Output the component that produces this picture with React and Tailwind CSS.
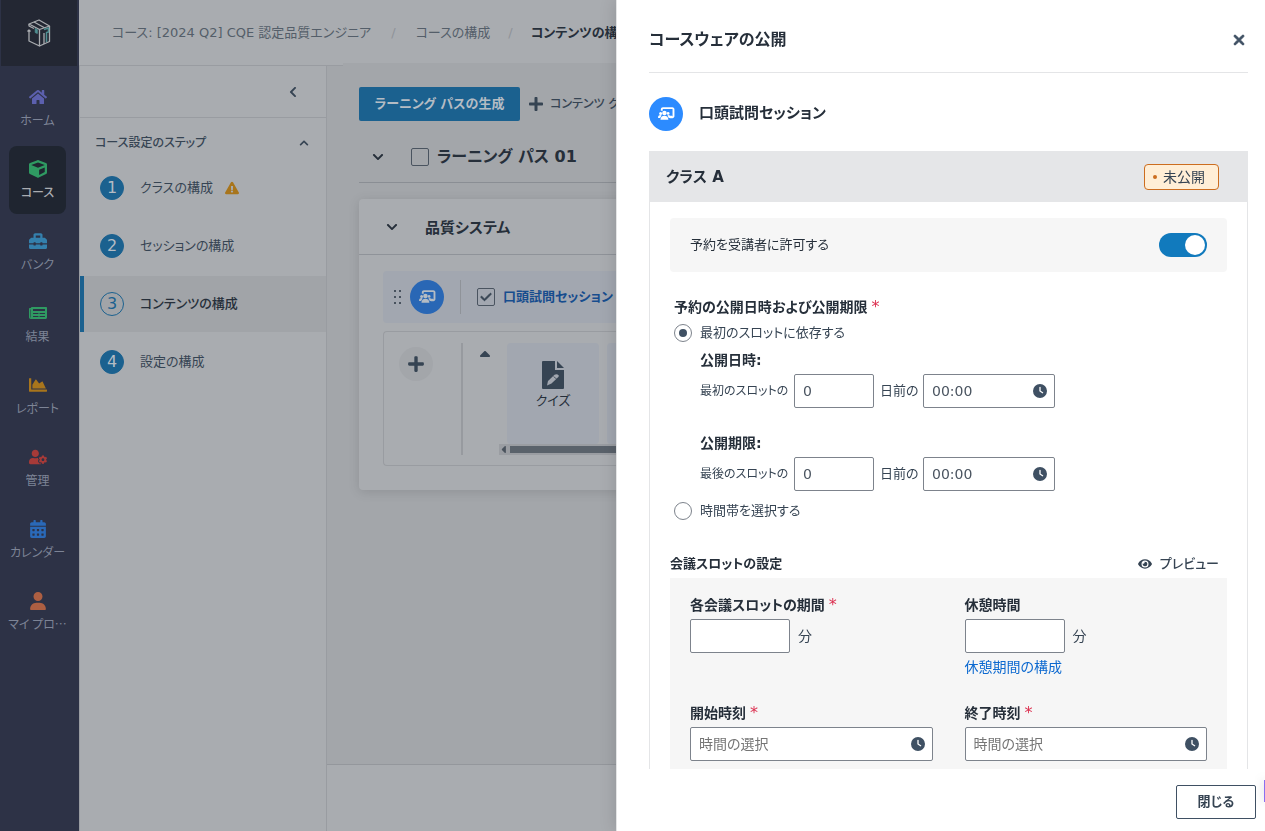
import { useState } from 'react';
import clsx from 'clsx';
import {
  FaHome,
  FaCube,
  FaToolbox,
  FaNewspaper,
  FaChartArea,
  FaUserCog,
  FaCalendarAlt,
  FaExclamationTriangle,
  FaChevronDown,
  FaChevronUp,
  FaChevronLeft,
  FaPlus,
  FaEye,
} from 'react-icons/fa';
import { FaUser, FaXmark, FaClock, FaCheck, FaCaretUp, FaCaretLeft } from 'react-icons/fa6';

const NAV = [
  { label: 'ホーム', icon: FaHome, color: 'text-[#5c60ae]' },
  { label: 'コース', icon: FaCube, color: 'text-[#2f9a62]', active: true },
  { label: 'バンク', icon: FaToolbox, color: 'text-[#3480ad]' },
  { label: '結果', icon: FaNewspaper, color: 'text-[#2f9a62]' },
  { label: 'レポート', icon: FaChartArea, color: 'text-[#a8751c]' },
  { label: '管理', icon: FaUserCog, color: 'text-[#a63a38]' },
  { label: 'カレンダー', icon: FaCalendarAlt, color: 'text-[#2a69b8]' },
  { label: 'マイ プロ…', icon: FaUser, color: 'text-[#ad5f42]' },
];

const STEPS = [
  { label: 'クラスの構成', warning: true },
  { label: 'セッションの構成' },
  { label: 'コンテンツの構成', current: true },
  { label: '設定の構成' },
];

function Logo() {
  return (
    <svg viewBox="0 0 24 28" className="w-6 h-7" fill="none" stroke="#a9acb0" strokeWidth="1.3" strokeLinejoin="round">
      <path d="M2 5 L12 1 L22.5 7 L12.5 10.5 Z" />
      <path d="M7 3 L17.5 8.7" />
      <path d="M0.5 12.5 L2 11 L3.5 12.5 M2 11.5 V22 L12.5 27 V10.5" />
      <path d="M22.5 7 V22.5 L12.5 27" />
      <path d="M17 14 V25" />
      <path d="M2 5 V7 L7 9.5" />
      <path d="M8.2 9.5 V13.5 L10.3 14.5 V10.5 Z" fill="#4f8f92" stroke="#4f8f92" strokeWidth="0.8" />
      <path d="M17 10.5 L21.5 9 V13 L19.5 13.5 V23" stroke="#4f8f92" strokeWidth="1.5" />
    </svg>
  );
}

function SessionIcon({ className }) {
  return (
    <svg viewBox="0 0 18 14" className={className}>
      <path d="M4 4 V2.4 A1.2 1.2 0 0 1 5.2 1.2 H15 A1.2 1.2 0 0 1 16.4 2.4 V9.4 A1.2 1.2 0 0 1 15 10.8 H12.5" fill="none" stroke="currentColor" strokeWidth="2" />
      <path d="M11.5 9.2 H15 V11 H12 Z" fill="currentColor" />
      <circle cx="6.8" cy="6.4" r="2.4" fill="currentColor" />
      <circle cx="2.8" cy="6.8" r="1.6" fill="currentColor" />
      <circle cx="10.7" cy="6.8" r="1.5" fill="currentColor" />
      <path d="M2.6 13.6 Q2.8 9.2 6.8 9.2 Q10.8 9.2 11 13.6 Z" fill="currentColor" />
      <path d="M0 11.6 Q0 8.6 2.6 8.6 L3.8 9 L2.2 11.6 Z" fill="currentColor" />
      <path d="M10 9 L11 8.6 Q13.4 8.8 13.4 11.6 H11.4 Z" fill="currentColor" />
    </svg>
  );
}

function QuizIcon() {
  return (
    <svg viewBox="0 0 22 28" className="w-[22px] h-7">
      <path d="M0 1 Q0 0 1 0 H13 V9 H22 V27 Q22 28 21 28 H1 Q0 28 0 27 Z" fill="#364453" />
      <path d="M15 0 L22 7 H15 Z" fill="#364453" />
      <path d="M5 24.5 L6 20 L12.5 13.7 Q15 12.3 16.8 14.6 Q17 15.2 16.3 16 L9.5 22.6 Z" fill="#a2a7b0" />
      <path d="M11.5 15.5 L14.8 18.2" stroke="#364453" strokeWidth="0.8" />
    </svg>
  );
}

function DragHandle() {
  return (
    <svg viewBox="0 0 8 15" className="w-2 h-[15px]" fill="#48525e">
      <path d="M0 0h2v2H0z M5 0h2v2H5z M0 6h2v2H0z M5 6h2v2H5z M0 12h2v2H0z M5 12h2v2H5z" />
    </svg>
  );
}

function Checkbox({ label, defaultChecked }) {
  return (
    <span className="grid shrink-0 place-items-center">
      <input
        type="checkbox"
        aria-label={label}
        defaultChecked={defaultChecked}
        className="peer col-start-1 row-start-1 size-[18px] appearance-none rounded-xs border border-[#4a5460]"
      />
      <FaCheck className="pointer-events-none invisible col-start-1 row-start-1 size-3 text-[#364453] peer-checked:visible" stroke="currentColor" strokeWidth="30" />
    </span>
  );
}

function Sidebar() {
  return (
    <nav className="flex w-[79px] shrink-0 flex-col bg-[#2d3246]">
      <a href="#top" aria-label="トップ" className="ml-px mr-0.5 flex h-[66px] items-center justify-center bg-[#232733]">
        <Logo />
      </a>
      <ul className="mr-1 flex flex-col items-center gap-1 pt-2">
        {NAV.map(({ label, icon: Icon, color, active }) => (
          <li key={label}>
            <a
              href="#nav"
              className={clsx(
                "flex h-[68px] w-[57px] flex-col items-center rounded-lg pt-3.5 font-['Noto_Sans_CJK_JP',sans-serif] text-xs",
                active ? 'bg-[#1f2530] text-[#a9acb0] font-medium' : 'text-[#7d8496]'
              )}
            >
              <Icon className={clsx('size-[18px]', color)} />
              <span className="mt-1 block h-5 text-center leading-5 whitespace-nowrap">{label}</span>
            </a>
          </li>
        ))}
      </ul>
    </nav>
  );
}

function StepPanel() {
  return (
    <aside className="flex w-[248px] shrink-0 flex-col border-x border-[#999ca1]">
      <div className="flex h-[52px] items-center justify-end border-b border-[#999ca1] pr-[27px]">
        <button type="button" aria-label="折りたたむ">
          <FaChevronLeft className="size-3 text-[#364453]" />
        </button>
      </div>
      <button type="button" className="flex h-[42px] items-center justify-between pt-2 pr-[17px] pl-[15px] text-xs font-medium">
        コース設定のステップ
        <FaChevronUp className="size-2.5" />
      </button>
      <ol className="flex flex-col gap-0.5">
        {STEPS.map((step, i) => (
          <li key={step.label}>
            <a
              href="#step"
              className={clsx(
                'flex h-14 items-center border-l-4 pl-4 text-[13px]',
                step.current ? 'border-[#1b618f] bg-[#a1a4a8] font-medium text-[#262f3a]' : 'border-transparent'
              )}
            >
              <span
                className={clsx(
                  'flex size-6 items-center justify-center rounded-full border border-[#1b618f] text-base font-normal',
                  step.current ? 'text-[#1b618f]' : 'bg-[#1b618f] text-[#b4bcc4]'
                )}
              >
                {i + 1}
              </span>
              <span className="ml-4">{step.label}</span>
              {step.warning && <FaExclamationTriangle className="ml-3 size-3.5 text-[#a8751c]" />}
            </a>
          </li>
        ))}
      </ol>
    </aside>
  );
}

function LearningPath() {
  return (
    <main className="flex min-w-0 flex-1 flex-col bg-[#a3a6aa]">
      <div className="-mt-[3px] ml-4 flex-1 overflow-hidden bg-[#a3a6aa] pt-6 pl-4 whitespace-nowrap">
        <div className="flex items-center">
          <button type="button" className="h-[34px] w-[161px] rounded-xs bg-[#1b618f] text-[13px] font-bold text-[#b4bcc4]">
            ラーニング パスの生成
          </button>
          <button type="button" className="ml-2 flex items-center gap-1.5 text-xs font-medium">
            <FaPlus className="size-4" />
            コンテンツ グループの追加
          </button>
        </div>
        <div className="flex h-[62px] items-center border-b border-[#8a8e94] pt-2.5 pl-[13px]">
          <FaChevronDown className="size-3 text-[#262f3a]" />
          <span className="ml-[27px]">
            <Checkbox label="ラーニング パス 01" />
          </span>
          <h1 className="ml-2 text-base font-bold text-[#262f3a]">ラーニング パス 01</h1>
        </div>

        <section className="mt-4 rounded-sm bg-[#a9acb0] pb-6 shadow-[0_2px_12px_rgba(0,0,0,0.12)]">
          <header className="flex h-14 items-center border-b border-[#8f9399] pl-[27px]">
            <FaChevronDown className="size-3 text-[#262f3a]" />
            <h2 className="ml-[27px] pt-1 text-[15px] font-bold text-[#262f3a]">品質システム</h2>
          </header>
          <div className="mt-4 ml-6 flex h-[52px] items-center rounded-sm bg-[#a2a7b0] pl-[11px]">
            <DragHandle />
            <span className="ml-2 flex size-[34px] items-center justify-center rounded-full bg-[#2967b5] text-[#b4bcc4]">
              <SessionIcon className="w-[17px]" />
            </span>
            <span className="ml-4 h-[34px] w-px bg-[#8f9399]" />
            <span className="ml-4">
              <Checkbox label="口頭試問セッション" defaultChecked />
            </span>
            <a href="#session" className="ml-2 text-[13px] font-bold text-[#174d8e]">口頭試問セッション</a>
          </div>
          <div className="mt-2 ml-6 flex h-[135px] rounded-sm border border-r-0 border-[#999ca1] pt-[11px] pl-[15px]">
            <button type="button" aria-label="追加" className="mt-1 flex size-[34px] items-center justify-center rounded-full bg-[#a3a6aa]">
              <FaPlus className="size-[18px] text-[#364453]" />
            </button>
            <span className="ml-7 h-28 w-0.5 bg-[#979a9f]" />
            <FaCaretUp className="ml-3.5 mt-1 size-4 shrink-0 text-[#364453]" />
            <div className="ml-1.5 flex-1 overflow-hidden">
              <div className="flex gap-2 pl-2">
                <div className="flex h-[101px] w-[92px] shrink-0 flex-col items-center rounded-sm bg-[#a2a7b0] pt-[18px]">
                  <QuizIcon />
                  <span className="text-[13px] leading-6 text-[#262f3a]">クイズ</span>
                </div>
                <div className="h-[101px] w-[92px] shrink-0 rounded-sm bg-[#a2a7b0]" />
              </div>
              <div className="flex h-[11px] items-center bg-[#9a9da2]">
                <FaCaretLeft className="size-[11px] text-[#4a535d]" />
                <span className="h-[7px] flex-1 bg-[#5a626b]" />
              </div>
            </div>
          </div>
        </section>
      </div>
      <footer className="h-[67px] border-t border-[#94979c] bg-[#a9acb0]" />
    </main>
  );
}

function Required() {
  return <span className="ml-1 text-base font-normal text-[#dc3050]">*</span>;
}

function TimeInput({ id, label, className, ...props }) {
  return (
    <div className={clsx('flex h-[34px] items-center rounded-xs border border-[#7d838c] bg-white pr-[7px]', className)}>
      <input
        id={id}
        type="text"
        aria-label={label}
        className="h-full min-w-0 flex-1 px-2 text-[#4a5460] outline-none placeholder:text-[#757575]"
        {...props}
      />
      <FaClock className="size-3.5 shrink-0 text-[#3f5063]" />
    </div>
  );
}

function OffsetRow({ title, from, id }) {
  return (
    <div className="pl-[26px]">
      <h4 className="flex h-7 items-center font-bold text-[#262f3a]">{title}</h4>
      <div className="flex items-center text-[13px] whitespace-nowrap">
        <label htmlFor={id} className="w-[94px] text-xs">{from}</label>
        <input
          id={id}
          type="text"
          defaultValue="0"
          className="h-[34px] w-20 rounded-xs border border-[#7d838c] px-2 text-sm text-[#4a5460]"
        />
        <span className="w-[49px] pl-1.5">日前の</span>
        <TimeInput label={`${title} 時刻`} defaultValue="00:00" className="w-[132px] text-sm" />
      </div>
    </div>
  );
}

function Radio({ label, checked, onChange }) {
  return (
    <label className="flex items-center gap-2 text-[13px]">
      <input
        type="radio"
        name="availability"
        checked={checked}
        onChange={onChange}
        className="flex size-[18px] appearance-none items-center justify-center rounded-full border border-[#7d838c] before:size-2 before:rounded-full checked:before:bg-[#3f5063]"
      />
      {label}
    </label>
  );
}

function MinutesField({ id, label, required }) {
  return (
    <>
      <label htmlFor={id} className="flex h-7 items-center font-bold text-[#262f3a]">
        {label}
        {required && <Required />}
      </label>
      <div className="flex items-center gap-2">
        <input id={id} type="text" className="h-[34px] w-[100px] rounded-xs border border-[#7d838c] bg-white px-2" />
        分
      </div>
    </>
  );
}

function PublishDrawer() {
  const [mode, setMode] = useState('first');

  return (
    <div role="dialog" aria-label="コースウェアの公開" className="fixed inset-y-0 right-0 flex w-[649px] max-w-full flex-col border-l border-[#e3e4e5] bg-white text-[#364453] shadow-[0_0_16px_rgba(0,0,0,0.15)]">
      <header className="mr-[17px] ml-8 flex h-[73px] shrink-0 items-center justify-between border-b border-[#e4e5e7] pt-2">
        <h2 className="text-base font-bold text-[#262f3a]">コースウェアの公開</h2>
        <button type="button" aria-label="閉じる" className="pr-px text-[#3f5063]">
          <FaXmark className="size-4" stroke="currentColor" strokeWidth="30" />
        </button>
      </header>

      <div className="min-h-0 flex-1 overflow-hidden pr-[17px] pl-8">
        <div className="mt-6 mb-5 flex items-center gap-4">
          <span className="flex size-[34px] items-center justify-center rounded-full bg-[#2c8bff] text-white">
            <SessionIcon className="w-[17px]" />
          </span>
          <h3 className="text-[15px] font-bold text-[#262f3a]">口頭試問セッション</h3>
        </div>

        <div className="flex h-[51px] items-center justify-between bg-[#e5e6e8] pr-[29px] pl-[17px]">
          <h3 className="pt-0.5 text-[15px] font-bold text-[#262f3a]">クラス A</h3>
          <span className="flex h-[26px] w-[75px] items-center gap-1.5 rounded-sm border border-[#cc6d1f] bg-[#ffeed6] pl-2 text-[#364453]">
            <span className="size-1 rounded-full bg-[#cc6d1f]" />
            未公開
          </span>
        </div>

        <div className="border-x border-[#e4e5e7] px-5 pt-4">
          <label className="flex h-[54px] items-center justify-between rounded-sm bg-[#f6f6f6] px-5 text-[13px] text-[#262f3a]">
            予約を受講者に許可する
            <input
              type="checkbox"
              role="switch"
              defaultChecked
              className="flex h-6 w-12 appearance-none items-center rounded-full bg-[#a9acb0] px-0.5 before:size-5 before:rounded-full before:bg-white checked:justify-end checked:bg-[#117abd]"
            />
          </label>

          <fieldset className="mt-[22px] pl-1">
            <legend className="flex h-[26px] items-center font-bold text-[#262f3a]">
              予約の公開日時および公開期限
              <Required />
            </legend>
            <div className="flex h-[26px] items-center">
              <Radio label="最初のスロットに依存する" checked={mode === 'first'} onChange={() => setMode('first')} />
            </div>
            <div className="flex flex-col gap-[21px]">
              <OffsetRow id="open-days" title="公開日時:" from="最初のスロットの" />
              <OffsetRow id="due-days" title="公開期限:" from="最後のスロットの" />
            </div>
            <div className="flex h-10 items-center">
              <Radio label="時間帯を選択する" checked={mode === 'period'} onChange={() => setMode('period')} />
            </div>
          </fieldset>

          <div className="mt-[19px] flex h-7 items-center justify-between text-[13px]">
            <h4 className="font-bold text-[#262f3a]">会議スロットの設定</h4>
            <button type="button" className="flex items-center gap-2 pr-2 font-medium">
              <FaEye className="size-3.5" />
              プレビュー
            </button>
          </div>

          <div className="grid grid-cols-2 gap-x-8 gap-y-[18px] bg-[#f6f6f6] px-5 pt-[13px] pb-2">
            <div>
              <MinutesField id="slot-length" label="各会議スロットの期間" required />
            </div>
            <div>
              <MinutesField id="break-length" label="休憩時間" />
              <a href="#break" className="flex h-7 items-center text-[#0c69d0]">休憩期間の構成</a>
            </div>
            <div>
              <label htmlFor="start-time" className="flex h-7 items-center font-bold text-[#262f3a]">
                開始時刻
                <Required />
              </label>
              <TimeInput id="start-time" placeholder="時間の選択" />
            </div>
            <div>
              <label htmlFor="end-time" className="flex h-7 items-center font-bold text-[#262f3a]">
                終了時刻
                <Required />
              </label>
              <TimeInput id="end-time" placeholder="時間の選択" />
            </div>
          </div>
        </div>
      </div>

      <footer className="flex h-[62px] shrink-0 items-start justify-end pt-4 pr-[9px]">
        <button type="button" className="h-[34px] w-20 rounded-xs border border-[#3f5063] text-[13px] font-bold">
          閉じる
        </button>
      </footer>

      {/* Chat launcher, mostly off screen */}
      <div className="absolute right-0 bottom-[29px] h-[22px] w-px bg-[#8b6ff0] shadow-[0_0_8px_rgba(0,0,0,0.5)]" />
    </div>
  );
}

export default function App() {
  return (
    <div className="flex h-screen overflow-hidden bg-[#a9acb0] font-['DejaVu_Sans','Noto_Sans_CJK_JP',sans-serif] text-sm text-[#364453] [font-feature-settings:'palt']">
      <Sidebar />
      <div className="flex min-w-0 flex-1 flex-col">
        <header className="flex h-[66px] shrink-0 items-center gap-4 border-b border-[#999ca1] pt-0.5 pl-[33px] text-[13px] whitespace-nowrap text-[#545e69]">
          <a href="#course">コース: [2024 Q2] CQE 認定品質エンジニア</a>
          <span className="px-1 text-[#8f9399]">/</span>
          <a href="#structure">コースの構成</a>
          <span className="px-0.5 text-[#8f9399]">/</span>
          <span className="font-bold text-[#262f3a]">コンテンツの構成</span>
        </header>
        <div className="flex min-h-0 flex-1">
          <StepPanel />
          <LearningPath />
        </div>
      </div>
      <PublishDrawer />
    </div>
  );
}
